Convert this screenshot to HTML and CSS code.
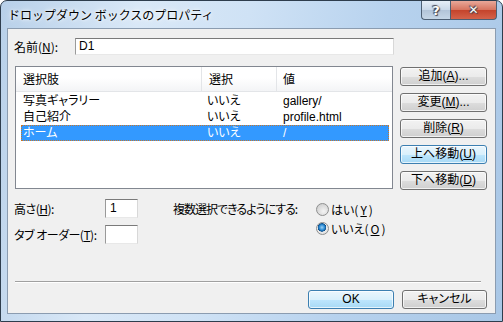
FILE: index.html
```html
<!DOCTYPE html>
<html lang="ja">
  <head>
    <meta charset="UTF-8" />
    <title>ドロップダウン ボックスのプロパティ</title>
    <link rel="stylesheet" href="styles.css">
  </head>
  <body>
    <div class="window">
      <div class="titlebar">
        <span class="title">ドロップダウン ボックスのプロパティ</span>
        <div class="caption">
          <span class="cap-help">?</span>
          <span class="cap-close">✕</span>
        </div>
      </div>

      <div class="client">
        <div class="name-row">
          <label class="name-label">名前(<u>N</u>):</label>
          <div class="textbox name-box">D1</div>
        </div>

        <div class="main">
          <div class="listbox">
            <div class="list-head">
              <span class="col1">選択肢</span>
              <span class="col2">選択</span>
              <span class="col3">値</span>
            </div>
            <div class="list-row">
              <span class="col1">写真ギャラリー</span>
              <span class="col2">いいえ</span>
              <span class="col3">gallery/</span>
            </div>
            <div class="list-row">
              <span class="col1">自己紹介</span>
              <span class="col2">いいえ</span>
              <span class="col3">profile.html</span>
            </div>
            <div class="list-row selected">
              <span class="col1">ホーム</span>
              <span class="col2">いいえ</span>
              <span class="col3">/</span>
            </div>
          </div>

          <div class="side-btns">
            <button class="btn">追加(<u>A</u>)...</button>
            <button class="btn">変更(<u>M</u>)...</button>
            <button class="btn">削除(<u>R</u>)</button>
            <button class="btn hot">上へ移動(<u>U</u>)</button>
            <button class="btn">下へ移動(<u>D</u>)</button>
          </div>
        </div>

        <div class="options">
          <div class="fields">
            <div class="field">
              <label>高さ(<u>H</u>):</label>
              <div class="textbox small">1</div>
            </div>
            <div class="field">
              <label>タブ オーダー(<u>T</u>):</label>
              <div class="textbox small"></div>
            </div>
          </div>
          <div class="multi-label">複数選択できるようにする:</div>
          <div class="radios">
            <div class="radio"><span class="dot"></span>はい(<u>Y</u>)</div>
            <div class="radio"><span class="dot checked"></span>いいえ(<u>O</u>)</div>
          </div>
        </div>

        <div class="separator"></div>

        <div class="footer">
          <button class="btn hot ok">OK</button>
          <button class="btn cancel">キャンセル</button>
        </div>
      </div>
    </div>
  </body>
</html>
```

FILE: styles.css
```css
html,
body {
  margin: 0;
  background: #ffffff;
}
body {
  font-family: "Liberation Sans", "Noto Sans CJK JP", sans-serif;
  font-size: 12px;
  font-feature-settings: "palt";
  color: #000;
}
u {
  text-decoration: underline;
  text-underline-offset: 1px;
}

/* window frame */
.window {
  width: 503px;
  height: 322px;
  box-sizing: border-box;
  border: 1px solid #2e3d4d;
  border-radius: 7px 7px 0 0;
  padding: 0 6px 7px 6px;
  display: flex;
  flex-direction: column;
  background: linear-gradient(100deg, #b8d0e9 0%, #d9e8f7 25%, #cfe2f5 45%, #b7d2ee 70%, #a9c7e6 100%);
}
.titlebar {
  height: 27px;
  display: flex;
  align-items: flex-start;
}
.title {
  font-family: "Noto Sans CJK JP", sans-serif;
  font-feature-settings: normal;
  font-size: 12px;
  line-height: 16px;
  margin-top: 6px;
  margin-left: 1px;
  color: #000;
  white-space: nowrap;
  text-shadow: 0 0 6px #ffffff, 0 0 3px #ffffff;
}
.caption {
  margin-left: auto;
  margin-right: -1px;
  display: flex;
}
.cap-help,
.cap-close {
  height: 19px;
  box-sizing: border-box;
  border: 1px solid #4d5f73;
  border-top: none;
  display: flex;
  align-items: center;
  justify-content: center;
  color: #fff;
  font-family: "DejaVu Sans", sans-serif;
  font-weight: bold;
  text-shadow: 0 0 1px #333, 1px 1px 1px #445, -1px -1px 1px #445;
}
.cap-help {
  width: 29px;
  font-size: 13px;
  border-right: none;
  border-radius: 0 0 0 4px;
  background: linear-gradient(#e6eef7, #c9d8e8 50%, #b2c4d8 51%, #c5d6e6);
}
.cap-close {
  width: 47px;
  font-size: 12px;
  border-radius: 0 0 4px 0;
  background: linear-gradient(#e8a899, #d6735e 50%, #c4432b 51%, #d4624a);
}

/* client area */
.client {
  flex: 1;
  background: #f0f0f0;
  border: 1px solid #8b9cb0;
  padding: 9px 0 0 6px;
  display: flex;
  flex-direction: column;
}
.name-row {
  display: flex;
  height: 17px;
  align-items: center;
}
.name-label {
  width: 61px;
  white-space: nowrap;
  font-family: "Noto Sans CJK JP", sans-serif;
}
.textbox {
  box-sizing: border-box;
  background: #fff;
  border: 1px solid;
  border-color: #7a7a7a #d8d8d8 #e8e8e8 #9a9a9a;
  padding: 0 3px;
  line-height: 15px;
  font-family: "Liberation Sans", "Noto Sans CJK JP", sans-serif;
}
.name-box {
  width: 319px;
  height: 17px;
}

/* list + buttons */
.main {
  display: flex;
  margin-top: 11px;
}
.listbox {
  width: 378px;
  height: 123px;
  margin-left: 1px;
  box-sizing: border-box;
  background: #fff;
  border: 1px solid #828790;
}
.list-head {
  display: flex;
  height: 24px;
  align-items: center;
  background: linear-gradient(#ffffff, #ffffff 45%, #f3f4f6);
  border-bottom: 1px solid #e3e5e8;
  font-family: "Noto Sans CJK JP", sans-serif;
}
.list-head span {
  box-sizing: border-box;
  height: 100%;
  line-height: 24px;
  padding-left: 7px;
  border-right: 1px solid #e3e5e8;
}
.list-head .col1 {
  width: 186px;
}
.list-head .col2 {
  width: 75px;
}
.list-head .col3 {
  flex: 1;
  border-right: none;
  padding-left: 6px;
}
.list-head + .list-row {
  margin-top: 1px;
}
.list-row {
  display: flex;
  height: 16px;
  line-height: 16px;
  margin: 0 3px 0 5px;
  box-sizing: border-box;
}
.list-row span {
  white-space: nowrap;
  font-family: "Liberation Sans", "Noto Sans CJK JP", sans-serif;
}
.list-row .col1 {
  width: 186px;
  padding-left: 2px;
  box-sizing: border-box;
}
.list-row .col2 {
  width: 76px;
}
.list-row.selected {
  background: #3399ff;
  color: #fff;
  outline: 1px dotted #c8772a;
  outline-offset: -1px;
}

.side-btns {
  display: flex;
  flex-direction: column;
  gap: 7px;
  margin-left: 7px;
  padding-top: 1px;
}
.btn {
  width: 87px;
  height: 19px;
  padding: 0;
  box-sizing: border-box;
  border: 1px solid #707070;
  border-radius: 3px;
  background: linear-gradient(#f2f2f2, #ebebeb 50%, #dddddd 51%, #cfcfcf);
  box-shadow: inset 0 0 0 1px rgba(255, 255, 255, 0.7);
  font-family: "Liberation Sans", "Noto Sans CJK JP", sans-serif;
  font-feature-settings: "palt";
  font-size: 12px;
  line-height: 15px;
  white-space: nowrap;
  color: #000;
}
.btn.hot {
  border-color: #3c7fb1;
  background: linear-gradient(#eaf6fd, #d9f0fc 50%, #bee6fd 51%, #a7d9f5);
}

/* lower options */
.options {
  display: flex;
  margin-top: 9px;
  height: 45px;
}
.fields {
  display: flex;
  flex-direction: column;
  gap: 7px;
  width: 124px;
}
.field {
  display: flex;
  align-items: center;
  height: 19px;
}
.field label {
  width: 91px;
  white-space: nowrap;
  letter-spacing: -0.5px;
  font-family: "Noto Sans CJK JP", sans-serif;
}
.textbox.small {
  width: 33px;
  height: 19px;
  line-height: 17px;
  padding-left: 4px;
}
.multi-label {
  margin-left: 35px;
  width: 143px;
  line-height: 19px;
  height: 19px;
  white-space: nowrap;
  letter-spacing: -1px;
  font-family: "Noto Sans CJK JP", sans-serif;
}
.radios {
  display: flex;
  flex-direction: column;
  padding-top: 4px;
  gap: 6px;
}
.radio {
  display: flex;
  align-items: center;
  height: 13px;
  gap: 2px;
  white-space: nowrap;
  font-family: "Noto Sans CJK JP", sans-serif;
}
.dot {
  width: 13px;
  height: 13px;
  box-sizing: border-box;
  border-radius: 50%;
  border: 1px solid #8e8f8f;
  background: radial-gradient(circle at 60% 65%, #f4f4f4 0%, #d4d4d4 70%, #c8c8c8);
}
.dot.checked {
  background: radial-gradient(circle at 45% 40%, #9fd3f5 0%, #2a8ad4 30%, #0d4f8a 45%, #eaeaea 50%, #d8d8d8 100%);
}

.separator {
  margin-top: 37px;
  margin-left: 1px;
  width: 466px;
  height: 1px;
  background: #a0a0a0;
  border-bottom: 1px solid #ffffff;
}
.footer {
  display: flex;
  margin-top: 7px;
  padding-left: 294px;
  gap: 8px;
}
.btn.ok {
  width: 86px;
}
.btn.cancel {
  width: 85px;
}
```
